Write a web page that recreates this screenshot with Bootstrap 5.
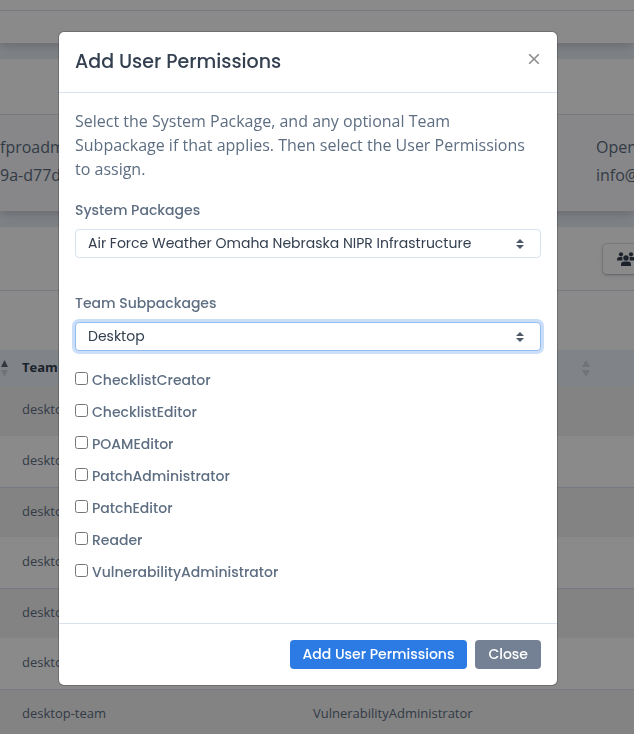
<!DOCTYPE html>
<html lang="en">
<head>
<meta charset="utf-8">
<meta name="viewport" content="width=device-width, initial-scale=1">
<title>Add User Permissions</title>
<link href="https://cdn.jsdelivr.net/npm/bootstrap@5.3.0/dist/css/bootstrap.min.css" rel="stylesheet">
<style>
:root { --line: #d8e2ef; --ink: #344050; --muted: #5e6e82; }
body { font-family: "Open Sans", sans-serif; color: var(--muted); background: #edf2f9; overflow: hidden; }
.modal { font-family: Poppins, Inter, sans-serif; }
.panel { background: #fff; box-shadow: 0 7px 14px 0 rgba(65,69,88,.12), 0 3px 6px 0 rgba(0,0,0,.08); }
.panel-top { height: 43px; padding-top: 10px; }
.panel-top hr, .panel-head { border-color: var(--line) !important; opacity: 1; }
.panel-head { height: 56px; }
.panel-tall { height: 64px; }
.details { background: #f9fafd; line-height: 28px; height: 96px; padding-top: 18px; }
.details .owner { width: 596px; }
.team-btn { background: #fff; border: 0; border-radius: 4px; height: 30px; padding: 0 14px; margin-left: 603px; box-shadow: 0 0 0 1px rgba(43,45,80,.12), 0 2px 5px 0 rgba(43,45,80,.12), 0 1px 2px 0 rgba(0,0,0,.12); }
.users { table-layout: fixed; font-size: 13px; margin-top: 59px; }
.users th, .users td { padding: 0 8px; vertical-align: middle; }
.users th { height: 36px; background: #edf2f9; color: var(--ink); font-weight: 700; }
.users td { height: 51px; padding-bottom: 2px; border-bottom: 1px solid var(--line); }
.users tbody tr:nth-child(odd) td { height: 50px; background: #f3f3f3; border-bottom: 0; }
.users .c-first { width: 14px; padding: 0; }
.users .c-team { width: 291px; }
.users .c-role { width: 293px; }
.modal-backdrop { --bs-backdrop-opacity: .46; }
.modal { padding-right: 18px; overflow: hidden; }
.modal-dialog { margin-top: 31px; }
.modal-content { border-color: rgba(0,0,0,.2); border-radius: 6px; }
.modal-header, .modal-footer { border-color: var(--line); }
.modal-header { height: 61px; }
.modal-title { font-size: 19px; font-weight: 500; color: var(--ink); }
.close-x { border: 0; background: none; padding: 0 1px 6px; line-height: 1; }
.intro { font-family: "Open Sans", sans-serif; }
.field-label { font-size: 14px; line-height: 26px; font-weight: 500; }
.field-gap { margin-bottom: 6px; }
.pick { height: 29px; padding: 0 12px; font-size: 14px; line-height: 27px; color: var(--ink); border: 1px solid var(--line); border-radius: 4px;
  background-image: url("data:image/svg+xml,%3csvg xmlns='http://www.w3.org/2000/svg' viewBox='0 0 8 10'%3e%3cpath fill='%234d5969' d='M4 0 8 4H0zM4 10 0 6h8z'/%3e%3c/svg%3e"); background-size: 8px 10px; background-position: right 16px center; }
.pick:focus { border-color: #96bdf2; box-shadow: 0 0 0 3px rgba(44,123,229,.25); }
.perms { padding-top: 1px; padding-bottom: 35px; }
.perm { height: 32px; }
.perm input { width: 13px; height: 13px; }
.act { font-size: 14px; font-weight: 500; line-height: 19px; padding: 4px 12px; border-radius: 4px; --bs-btn-border-color: transparent; }
.act-main { --bs-btn-bg: #2c7be5; }
.act-close { --bs-btn-bg: #748194; }
</style>
<script src="https://cdn.jsdelivr.net/npm/bootstrap@5.3.0/dist/js/bootstrap.bundle.min.js"></script>
</head>
<body>
<main class="d-flex flex-column gap-3 vh-100 overflow-hidden">
  <section class="panel panel-top flex-shrink-0"><hr class="m-0"></section>
  <section class="panel flex-shrink-0">
    <div class="panel-head border-bottom"></div>
    <div class="details d-flex text-nowrap">
      <div class="owner flex-shrink-0"><div>fproadmin</div><div>9a-d77d-</div></div>
      <div><div>OpenRMF</div><div>info@</div></div>
    </div>
  </section>
  <section class="panel flex-shrink-0">
    <div class="panel-head panel-tall border-bottom d-flex align-items-center">
      <button class="team-btn d-flex align-items-center" type="button" aria-label="Manage team">
        <svg width="18" height="14" viewBox="0 0 18 14" fill="#344050"><circle cx="4" cy="2.300" r="2.100"/><circle cx="14" cy="2.300" r="2.100"/><path d="M0 8.500V7.500Q0 5 2.500 5h3Q5 6.500 5.600 8.500zM18 8.500V7.500Q18 5 15.500 5h-3Q13 6.500 12.400 8.500z"/><circle cx="9" cy="6" r="2.700"/><path d="M4 14v-1.500Q4 9.500 7 9.500h4q3 0 3 3V14z"/></svg>
      </button>
    </div>
    <table class="users w-100">
      <thead><tr>
        <th class="c-first"><svg class="d-block" width="8" height="17" viewBox="0 0 8 17"><path fill="#606774" d="M4.500 0 8 7H1z"/><path fill="#d0d5dc" d="M1 10h7l-3.500 7z"/></svg></th>
        <th class="c-team">Team</th>
        <th class="c-role"><svg class="d-block ms-auto" width="8" height="17" viewBox="0 0 8 17"><path fill="#d0d5dc" d="M4 0 8 7H0zM0 10h8l-4 7z"/></svg></th>
        <th></th>
      </tr></thead>
      <tbody>
        <tr><td class="c-first"></td><td>desktop-team</td><td></td><td></td></tr>
        <tr><td class="c-first"></td><td>desktop-team</td><td></td><td></td></tr>
        <tr><td class="c-first"></td><td>desktop-team</td><td></td><td></td></tr>
        <tr><td class="c-first"></td><td>desktop-team</td><td></td><td></td></tr>
        <tr><td class="c-first"></td><td>desktop-team</td><td></td><td></td></tr>
        <tr><td class="c-first"></td><td>desktop-team</td><td></td><td></td></tr>
        <tr><td class="c-first"></td><td>desktop-team</td><td>VulnerabilityAdministrator</td><td></td></tr>
      </tbody>
    </table>
  </section>
</main>
<div class="modal-backdrop show"></div>
<div class="modal show d-block" tabindex="-1" role="dialog" aria-labelledby="dlgTitle">
  <div class="modal-dialog">
    <form class="modal-content">
      <div class="modal-header">
        <h5 class="modal-title" id="dlgTitle">Add User Permissions</h5>
        <button type="button" class="close-x" aria-label="Close dialog"><svg class="d-block" width="12" height="12" viewBox="0 0 12 12" stroke="#8c8c8c" stroke-width="1.600"><path d="M1.200 1.200l9.600 9.600M10.800 1.200l-9.600 9.600"/></svg></button>
      </div>
      <div class="modal-body pb-0">
        <p class="intro mb-3">Select the System Package, and any optional Team Subpackage if that applies. Then select the User Permissions to assign.</p>
        <div class="pb-2 mb-4">
          <label class="field-label field-gap d-block" for="pkg">System Packages</label>
          <select class="form-select pick" id="pkg"><option>Air Force Weather Omaha Nebraska NIPR Infrastructure</option></select>
        </div>
        <div class="mb-2 pb-1">
          <label class="field-label field-gap d-block" for="team">Team Subpackages</label>
          <select class="form-select pick" id="team" autofocus><option>Desktop</option></select>
        </div>
        <div class="perms">
          <div class="perm d-flex align-items-center gap-1"><input class="m-0 mb-1" type="checkbox" id="p1"><label class="field-label" for="p1">ChecklistCreator</label></div>
          <div class="perm d-flex align-items-center gap-1"><input class="m-0 mb-1" type="checkbox" id="p2"><label class="field-label" for="p2">ChecklistEditor</label></div>
          <div class="perm d-flex align-items-center gap-1"><input class="m-0 mb-1" type="checkbox" id="p3"><label class="field-label" for="p3">POAMEditor</label></div>
          <div class="perm d-flex align-items-center gap-1"><input class="m-0 mb-1" type="checkbox" id="p4"><label class="field-label" for="p4">PatchAdministrator</label></div>
          <div class="perm d-flex align-items-center gap-1"><input class="m-0 mb-1" type="checkbox" id="p5"><label class="field-label" for="p5">PatchEditor</label></div>
          <div class="perm d-flex align-items-center gap-1"><input class="m-0 mb-1" type="checkbox" id="p6"><label class="field-label" for="p6">Reader</label></div>
          <div class="perm d-flex align-items-center gap-1"><input class="m-0 mb-1" type="checkbox" id="p7"><label class="field-label" for="p7">VulnerabilityAdministrator</label></div>
        </div>
      </div>
      <div class="modal-footer p-3 gap-2">
        <button type="button" class="btn btn-primary act act-main m-0">Add User Permissions</button>
        <button type="button" class="btn btn-secondary act act-close m-0">Close</button>
      </div>
    </form>
  </div>
</div>
<script>document.getElementById('team').focus({ preventScroll: true });</script>
</body>
</html>
